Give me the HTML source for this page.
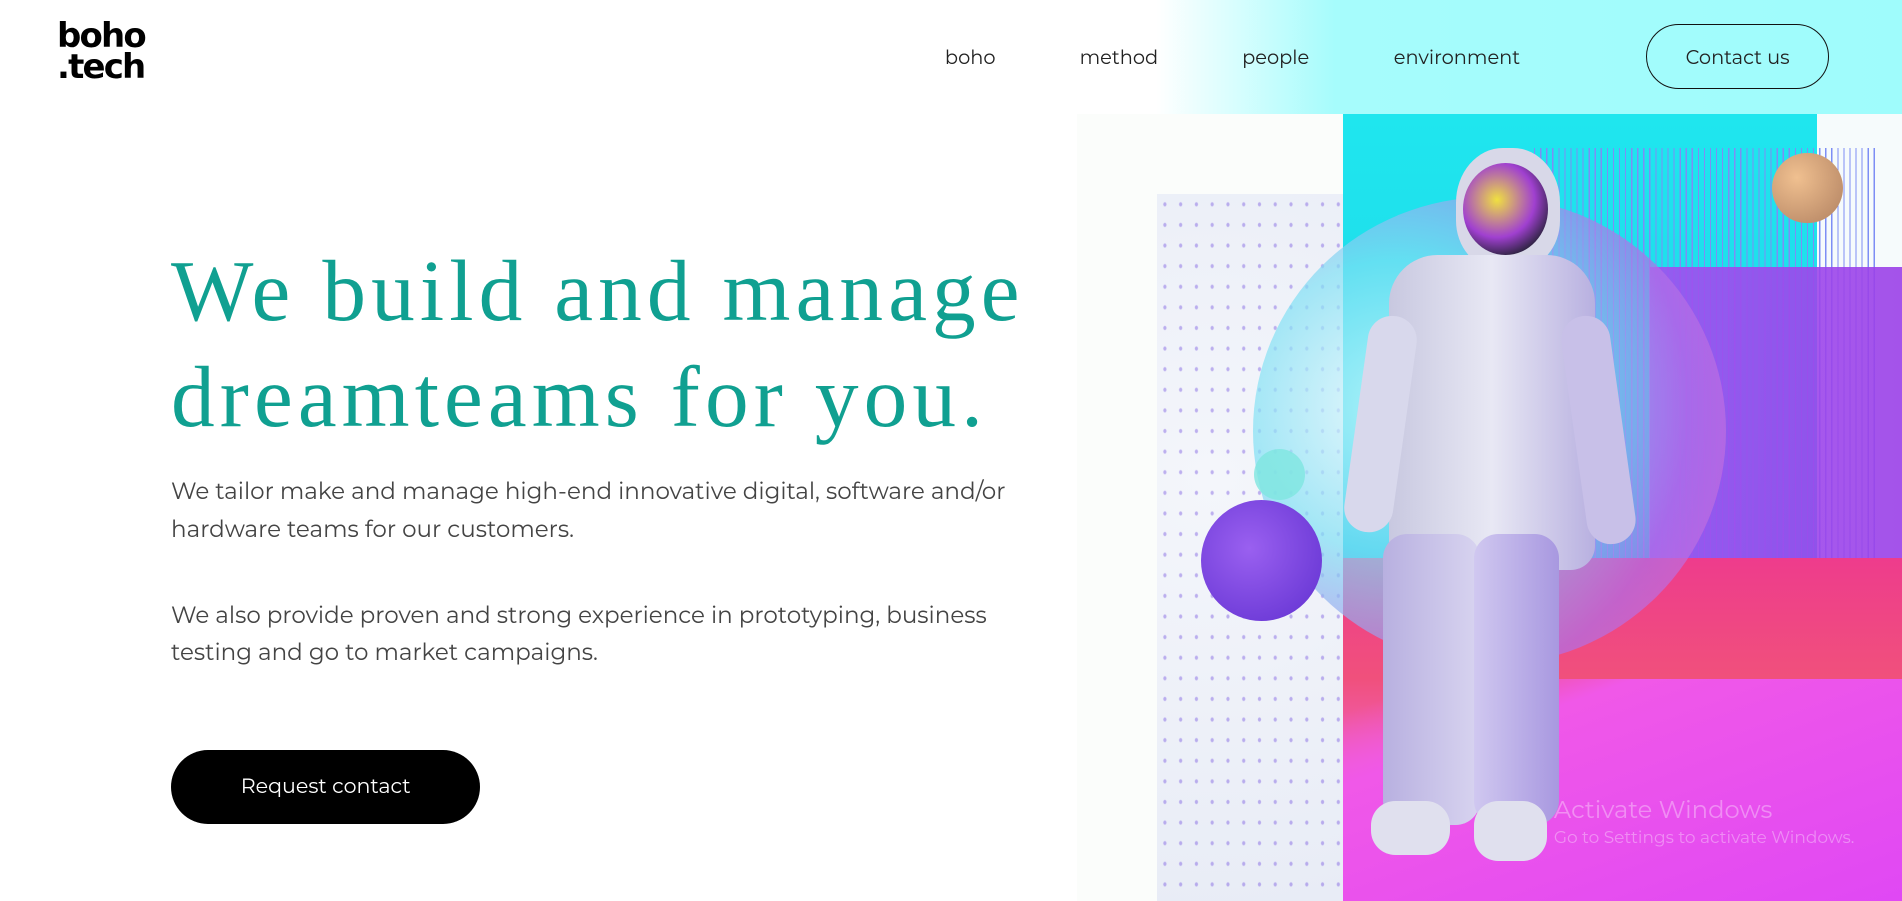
<!DOCTYPE html>
<html><head><meta charset="utf-8">
<style>
html,body{margin:0;padding:0;overflow:hidden;background:#fff}
#w{position:relative;width:1568px;height:743px;zoom:1.2130;overflow:hidden;font-family:"Montserrat","Liberation Sans",sans-serif}
.a{position:absolute}
.logo{left:47px;top:17px;font:bold 28px/26px "DejaVu Sans","Liberation Sans",sans-serif;letter-spacing:-1.5px;color:#000}
.nav{top:37px;font-size:16px;color:#222}
.btn{left:1357px;top:20px;width:151px;height:53px;border:1px solid #111;border-radius:27px;box-sizing:border-box;text-align:center;line-height:53px;font-size:16px;color:#222}
h1{position:absolute;left:141px;top:196px;margin:0;font:400 72px/88px "Liberation Serif",serif;color:#10a091;letter-spacing:4.2px}
p{position:absolute;left:141px;margin:0;font-size:19px;line-height:31px;color:#444;width:720px}
.rq{left:141px;top:618px;width:255px;height:61px;border-radius:31px;background:#000;color:#fff;text-align:center;line-height:61px;font-size:17px}
</style></head><body><div id="w">
<div class="a" style="left:900px;top:0;width:668px;height:94px;background:linear-gradient(90deg,#fff 0%,#fff 8%,#a6fcfc 30%,#9ffcfc 100%)"></div>
<div class="a logo">boho<br>.tech</div>
<div class="a nav" style="left:779px">boho</div>
<div class="a nav" style="left:890px">method</div>
<div class="a nav" style="left:1024px">people</div>
<div class="a nav" style="left:1149px">environment</div>
<div class="a btn">Contact us</div>
<h1>We build and manage<br>dreamteams for you.</h1>
<p style="top:390px">We tailor make and manage high-end innovative digital, software and/or hardware teams for our customers.</p>
<p style="top:492px">We also provide proven and strong experience in prototyping, business testing and go to market campaigns.</p>
<div class="a rq">Request contact</div>
<div class="a" style="left:888px;top:94px;width:680px;height:649px;background:#fbfdfb"></div>
<div class="a" style="left:954px;top:160px;width:153px;height:583px;background:radial-gradient(circle at 30% 40%,#f4f6fb,#e8ecf6);"></div>
<div class="a" style="left:954px;top:160px;width:153px;height:583px;background-image:radial-gradient(#7a5ae0 1px,transparent 1.6px);background-size:13px 17px;opacity:.45"></div>
<div class="a" style="left:1107px;top:94px;width:391px;height:650px;background:linear-gradient(180deg,#1fe6ee 0%,#1fd8ea 40%,#22b8e8 70%,#1aa8d8 100%)"></div>
<div class="a" style="left:1498px;top:94px;width:70px;height:126px;background:#f6fbfc"></div>
<div class="a" style="left:1265px;top:122px;width:282px;height:340px;background:repeating-linear-gradient(90deg,#7d8ef5 0 1px,transparent 1px 5px)"></div>
<div class="a" style="left:1360px;top:220px;width:208px;height:243px;background:linear-gradient(90deg,#a050f0,#9a40e8);opacity:.9"></div>
<div class="a" style="left:1107px;top:460px;width:461px;height:283px;background:linear-gradient(180deg,#ee3c8c 0%,#f0507c 35%,#f060c0 60%,#d050f0 100%)"></div>
<div class="a" style="left:1107px;top:560px;width:461px;height:183px;background:linear-gradient(160deg,transparent 0 8%,#f058e8 25%,#e048f4 100%)"></div>
<div class="a" style="left:1033px;top:162px;width:390px;height:386px;border-radius:50%;background:radial-gradient(circle at 30% 45%,#e8fbff 0%,#80e0f4 35%,#b070e8 70%,#e068d0 100%);opacity:.7"></div>
<div class="a" style="left:1461px;top:126px;width:58px;height:58px;border-radius:50%;background:radial-gradient(circle at 35% 35%,#f0c090,#b08060)"></div>
<div class="a" style="left:990px;top:412px;width:100px;height:100px;border-radius:50%;background:radial-gradient(circle at 40% 40%,#9a60f0,#6030d0)"></div>
<div class="a" style="left:1034px;top:370px;width:42px;height:42px;border-radius:50%;background:#7ee6e0;opacity:.8"></div>
<div class="a" style="left:1200px;top:122px;width:86px;height:100px;border-radius:45% 45% 40% 40%;background:#d8d8e8"></div>
<div class="a" style="left:1206px;top:134px;width:70px;height:76px;border-radius:50%;background:radial-gradient(circle at 40% 40%,#f0e040,#a040d0 50%,#202030 80%)"></div>
<div class="a" style="left:1145px;top:210px;width:170px;height:260px;border-radius:40px 40px 20px 20px;background:linear-gradient(90deg,#c8c8e0,#e8e8f4,#b8b0e0)"></div>
<div class="a" style="left:1118px;top:260px;width:40px;height:180px;border-radius:20px;background:#d8d8ec;transform:rotate(8deg)"></div>
<div class="a" style="left:1298px;top:260px;width:40px;height:190px;border-radius:20px;background:#c8c0e8;transform:rotate(-8deg)"></div>
<div class="a" style="left:1140px;top:440px;width:80px;height:240px;border-radius:20px;background:linear-gradient(90deg,#b8b0e0,#d8d4f0)"></div>
<div class="a" style="left:1215px;top:440px;width:70px;height:240px;border-radius:20px;background:linear-gradient(90deg,#d0c8f0,#a898e0)"></div>
<div class="a" style="left:1130px;top:660px;width:65px;height:45px;border-radius:20px;background:#e0e0ee"></div>
<div class="a" style="left:1215px;top:660px;width:60px;height:50px;border-radius:20px;background:#e0e0ee"></div>
<div class="a" style="left:1281px;top:656px;font-size:20px;color:rgba(255,255,255,.35)">Activate Windows</div>
<div class="a" style="left:1281px;top:683px;font-size:14px;color:rgba(255,255,255,.35)">Go to Settings to activate Windows.</div>
</div></body></html>
